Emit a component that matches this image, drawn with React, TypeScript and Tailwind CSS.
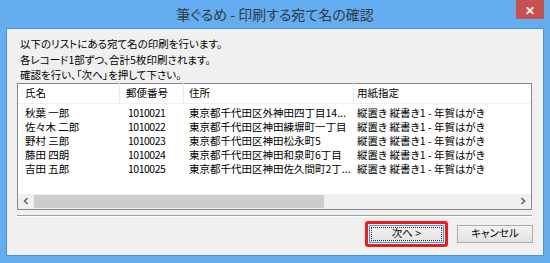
import React from "react";

const rows = [
  { name: "秋葉 一郎", zip: "1010021", addr: "東京都千代田区外神田四丁目14..." },
  { name: "佐々木 二郎", zip: "1010022", addr: "東京都千代田区神田練塀町一丁目" },
  { name: "野村 三郎", zip: "1010023", addr: "東京都千代田区神田松永町5" },
  { name: "藤田 四朗", zip: "1010024", addr: "東京都千代田区神田和泉町6丁目" },
  { name: "吉田 五郎", zip: "1010025", addr: "東京都千代田区神田佐久間町2丁..." },
];

const paper = "縦置き 縦書き1 - 年賀はがき";

export default function App() {
  return (
    <div className="h-[263px] w-[550px] overflow-hidden bg-[#64adf0] font-['Noto_Sans_CJK_JP',sans-serif] [font-feature-settings:'palt']">
      <div className="grid h-[28px] grid-cols-[1fr_auto_1fr] items-start">
        <div />
        <div className="pt-[4px] text-[14px] leading-[20px] text-[#2f3a45]">筆ぐるめ - 印刷する宛て名の確認</div>
        <div className="flex justify-end pr-[6px]">
          <div className="flex h-[19px] w-[28px] items-center justify-center bg-[#c75050] text-[12px] font-bold leading-none text-white">
            ✕
          </div>
        </div>
      </div>

      <div className="mx-[6px] h-[228px] border border-[#4b94d8] bg-[#f0f0f0] text-[10.5px] text-black">
        <div className="pl-[13px] pt-[7px] leading-[15.5px]">
          <p>以下のリストにある宛て名の印刷を行います。</p>
          <p>各レコード1部ずつ、合計5枚印刷されます。</p>
          <p>確認を行い、「次へ」を押して下さい。</p>
        </div>

        <div className="ml-[10px] flex h-[127px] w-[515px] flex-col border border-[#828790] bg-white">
          <div className="flex h-[20px] items-center border-b border-[#eef2f7] leading-[20px]">
            <div className="w-[102px] border-r border-[#e3e8ef] pl-[7px]">氏名</div>
            <div className="w-[64px] border-r border-[#e3e8ef] pl-[6px]">郵便番号</div>
            <div className="w-[170px] border-r border-[#e3e8ef] pl-[5px]">住所</div>
            <div className="flex-1 pl-[3px]">用紙指定</div>
          </div>
          <div className="flex-1 pt-[2px]">
            {rows.map((r) => (
              <div key={r.zip} className="flex h-[14px] items-center leading-[14px] whitespace-nowrap">
                <div className="w-[102px] pl-[7px]">{r.name}</div>
                <div className="w-[64px] pl-[8px] tracking-[-0.5px]">{r.zip}</div>
                <div className="w-[170px] overflow-hidden pl-[5px]">{r.addr}</div>
                <div className="flex-1 pl-[3px]">{paper}</div>
              </div>
            ))}
          </div>
          <div className="flex h-[15px] items-stretch bg-[#f0f0f0]">
            <div className="flex w-[16px] items-center justify-center">
              <svg width="6" height="8" viewBox="0 0 6 8">
                <path d="M4.5 1 L1.5 4 L4.5 7" fill="none" stroke="#606060" strokeWidth="1.5" />
              </svg>
            </div>
            <div className="my-[1px] w-[290px] bg-[#cdcdcd]" />
            <div className="flex-1" />
            <div className="flex w-[16px] items-center justify-center">
              <svg width="6" height="8" viewBox="0 0 6 8">
                <path d="M1.5 1 L4.5 4 L1.5 7" fill="none" stroke="#606060" strokeWidth="1.5" />
              </svg>
            </div>
          </div>
        </div>

        <div className="ml-[10px] mt-[5px] w-[515px] border-t border-b border-t-[#a0a0a0] border-b-white" />

        <div className="mt-[4px] flex items-center justify-end gap-[9px] pr-[10px]">
          <div className="rounded-[3px] border-[3px] border-[#ee1c1c] p-[1px]">
            <div className="flex h-[18px] w-[75px] items-center justify-center border border-[#3c9be6] bg-gradient-to-b from-[#f2f2f2] to-[#e3e3e3] p-[1px]">
              <div className="flex h-full w-full items-center justify-center border border-dotted border-[#333] leading-none">
                次へ &gt;
              </div>
            </div>
          </div>
          <div className="flex h-[18px] w-[76px] items-center justify-center border border-[#acacac] bg-gradient-to-b from-[#f2f2f2] to-[#e3e3e3] leading-none">
            キャンセル
          </div>
        </div>
      </div>
    </div>
  );
}
